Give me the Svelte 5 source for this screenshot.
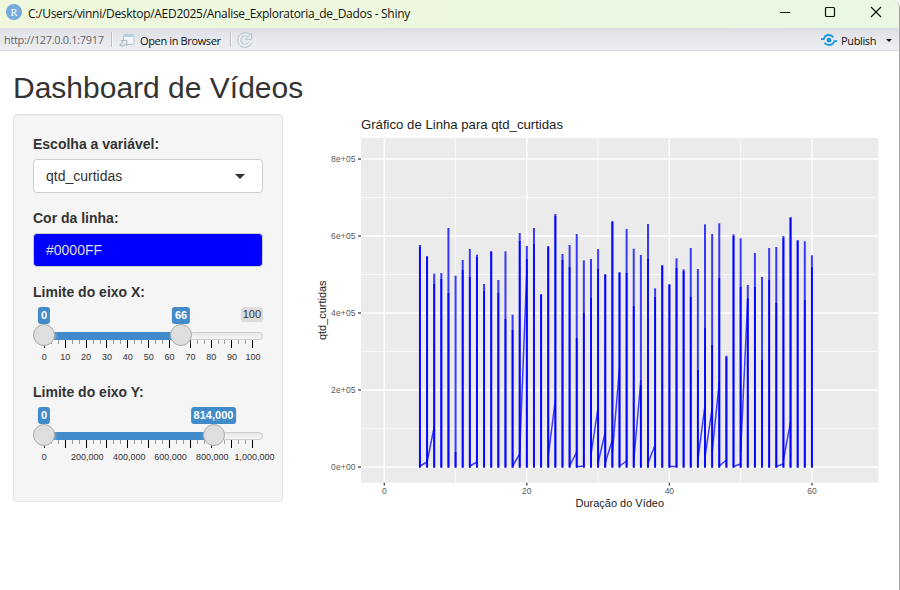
<script>
  const baseline = 467.6;
  const px = (n) => 384.3 + n * 7.127;

  // [top of the line, height at which overlapping strokes turn solid], durations 5 to 60
  const spikes = [
    [245, 247], [256, 257], [273.7, 284], [273, 279], [228, 293], [275.7, 452], [260, 270], [249, 277], [254.7, 257],
    [284, 291], [251, 252], [280, 293], [251.3, 319], [314.7, 330], [233, 241], [246, 259], [228, 244], [294, 295],
    [246, 247], [214, 216], [254, 260], [245, 267], [234, 338], [260.3, 313], [259, 298], [249, 269], [274, 275],
    [221, 222], [272, 273], [229, 273], [248.7, 306], [255, 385], [224, 259], [288.3, 297], [265, 266], [284, 285],
    [258.3, 268], [269.3, 271], [248, 297], [269, 370], [224.3, 328], [234, 345], [223.3, 278], [355.7, 357],
    [234.3, 236], [238.3, 287], [285, 299], [253, 287], [277, 360], [248, 280], [247, 303], [236, 238], [217, 218],
    [240, 241], [241.3, 300], [255.3, 267]
  ];

  const links = [
    [5, 466, 462], [6, 462, 427], [12, 466, 462], [18, 466, 454], [19, 452, 270], [23, 456, 400], [26, 466, 452],
    [27, 466.8, 466], [29, 455, 407], [30, 463, 432], [31, 463, 440], [32, 453, 368], [33, 466, 461], [35, 461, 380],
    [37, 463, 445], [40, 466.5, 466.5], [44, 460, 405], [45, 457, 408], [46, 452, 382], [47, 466, 460],
    [49, 466.5, 464], [50, 452, 298], [55, 466.5, 464], [56, 460, 422]
  ];

  const yTicks = [[159, '8e+05'], [236, '6e+05'], [313, '4e+05'], [390, '2e+05'], [467, '0e+00']];
  const xTicks = [0, 20, 40, 60];

  const sliders = [
    { label: 'Limite do eixo X:', value: '66', at: 148, max: '100',
      ticks: [0, 10, 20, 30, 40, 50, 60, 70, 80, 90, 100].map((v, i) => [i * 20.87, String(v)]) },
    { label: 'Limite do eixo Y:', value: '814,000', at: 180.5, max: '',
      ticks: [[0, '0'], [43, '200,000'], [85, '400,000'], [126.2, '600,000'], [168, '800,000'], [210.2, '1,000,000']] }
  ];
  const marks = Array.from({ length: 31 }, (_, i) => i);
</script>

<div class="window">
  <header class="titlebar">
    <svg class="logo" width="16" height="16" viewBox="0 0 16 16">
      <circle cx="8" cy="8" r="8" fill="#75aadb" />
      <text x="8" y="11.6" text-anchor="middle" font-family="Liberation Serif, serif" font-size="10.5" fill="#fff">R</text>
    </svg>
    <span class="caption">C:/Users/vinni/Desktop/AED2025/Analise_Exploratoria_de_Dados - Shiny</span>
    <svg class="controls" width="104" height="12" viewBox="0 0 104 12" fill="none" stroke="#111" stroke-width="1">
      <path d="M0 6.5H10" />
      <rect x="45.5" y="1.5" width="9" height="9" rx="1" stroke-width="1.2" />
      <path d="M91 1L101 11M101 1L91 11" stroke-width="1.2" />
    </svg>
  </header>

  <div class="toolbar">
    <span class="url">http://127.0.0.1:7917</span>
    <i class="sep"></i>
    <svg class="open" width="16" height="14" viewBox="0 0 16 14" fill="none">
      <rect x="4.5" y="1.5" width="10.5" height="10" rx="1.5" fill="#f1f5f9" stroke="#b4c8d8" />
      <path d="M5 3H14.5" stroke="#b5d1e7" stroke-width="2" />
      <path d="M.7 12.3L3.6 8.8L2.2 7.4H7.8V12.6L6.2 11.2L4 13.2Z" fill="#e4e8ee" stroke="#a3b0bb" stroke-width=".9" />
    </svg>
    <span class="browse">Open in Browser</span>
    <i class="sep second"></i>
    <svg class="reload" width="16" height="16" viewBox="0 0 16 16" fill="none">
      <path d="M12.3 4A5.8 5.8 0 1 0 13.3 10.5" stroke="#b4c3d0" stroke-width="3.8" />
      <path d="M12.3 4A5.8 5.8 0 1 0 13.3 10.5" stroke="#ecf1f6" stroke-width="2" />
      <path d="M14.6 1.2V7.3H8.5Z" fill="#e8eef4" stroke="#b4c3d0" />
    </svg>
    <div class="publish">
      <svg width="16" height="12" viewBox="0 0 16 12" fill="none" stroke="#1396e2" stroke-width="1.8">
        <circle cx="8" cy="6.2" r="2.4" fill="#1396e2" stroke="none" />
        <path d="M0 5.1H2.7C3.5 2.5 5.3 1 7.8 1C9.8 1 11.2 1.7 12.4 3.2" />
        <path d="M16 7.1H13.4C12.6 9.6 10.6 11 8.2 11C6.2 11 4.6 10.3 3.5 8.7" />
      </svg>
      <span>Publish</span>
      <i class="drop"></i>
    </div>
  </div>

  <main>
    <h2>Dashboard de Vídeos</h2>
    <div class="row">
      <form class="well">
        <div class="group">
          <span class="label">Escolha a variável:</span>
          <div class="input select"><span>qtd_curtidas</span><i class="caret"></i></div>
        </div>
        <div class="group">
          <span class="label">Cor da linha:</span>
          <div class="input colour">#0000FF</div>
        </div>
        {#each sliders as s}
          <div class="group">
            <span class="label">{s.label}</span>
            <div class="slider">
              <div class="track"></div>
              <div class="fill" style="width:{s.at - 11}px"></div>
              <svg class="scale" width="250" height="27" viewBox="0 0 250 27">
                {#each marks as m}
                  <rect x={Math.round(11 + m * 6.94)} y="0" width="1" height={m % 3 ? 4 : 8} fill={m % 3 ? '#999' : '#000'} />
                {/each}
                {#each s.ticks as [x, text]}
                  <text x={x + 11.3} y="20" text-anchor="middle">{text}</text>
                {/each}
              </svg>
              <i class="handle" style="left:0"></i>
              <i class="handle" style="left:{s.at - 11}px"></i>
              <b class="tag" style="left:11px">0</b>
              <b class="tag" style="left:{s.at}px">{s.value}</b>
              {#if s.max}<span class="max">{s.max}</span>{/if}
            </div>
          </div>
        {/each}
      </form>

      <svg class="plot" width="586" height="400" viewBox="313 114 586 400">
        <text class="title" x="361" y="129" textLength="202" lengthAdjust="spacingAndGlyphs">Gráfico de Linha para qtd_curtidas</text>
        <rect x="361" y="138" width="517.5" height="344.7" fill="#ebebeb" />
        <g stroke="#fff">
          {#each [197.5, 274.5, 351.5, 428.5] as y}<path d="M361 {y}H878.5" stroke-width=".7" />{/each}
          {#each [10, 30, 50] as n}<path d="M{px(n)} 138V482.7" stroke-width=".7" />{/each}
          {#each yTicks as [y]}<path d="M361 {y}H878.5" stroke-width="1.4" />{/each}
          {#each xTicks as n}<path d="M{px(n)} 138V482.7" stroke-width="1.4" />{/each}
        </g>
        <g stroke="#0000ff">
          {#each spikes as [top, solid], i}
            <path d="M{px(i + 5)} {top}V{baseline}" stroke-width="2" stroke-opacity=".76" />
            <path d="M{px(i + 5)} {solid}V{baseline}" stroke-width="1.8" stroke-opacity=".9" />
          {/each}
          {#each links as [n, a, b]}
            <path d="M{px(n)} {a}L{px(n + 1)} {b}" stroke-width="1.5" stroke-opacity=".75" />
          {/each}
        </g>
        {#each yTicks as [y, t]}
          <path d="M358 {y}H361" stroke="#444" stroke-width="1.3" />
          <text class="tick" x="355.5" y={y + 3} text-anchor="end" textLength="24.5">{t}</text>
        {/each}
        {#each xTicks as n}
          <path d="M{px(n)} 482.7V485.5" stroke="#444" stroke-width="1.3" />
          <text class="tick" x={px(n)} y="494" text-anchor="middle">{n}</text>
        {/each}
        <text class="axis" x="575.5" y="507" textLength="88.5" lengthAdjust="spacingAndGlyphs">Duração do Vídeo</text>
        <text class="axis" transform="translate(326 340) rotate(-90)" textLength="59.5" lengthAdjust="spacingAndGlyphs">qtd_curtidas</text>
      </svg>
    </div>
  </main>
</div>

<style>
  :global(body) { background: #fff; }
  .window {
    box-sizing: border-box; width: 900px; height: 590px; overflow: hidden;
    border-right: 1px solid #a6a6a6; border-top-right-radius: 7px; background: #fff;
    font-family: "Liberation Sans", Arial, sans-serif; color: #333;
  }
  .titlebar {
    display: flex; align-items: center; height: 28px; box-sizing: border-box; padding: 0 15px 4px 6px;
    background: linear-gradient(90deg, #eff8dc, #eaf7e3);
  }
  .caption { margin-left: 6px; font: 12px/18px "Open Sans", sans-serif; letter-spacing: -.3px; color: #111; white-space: nowrap; padding-top: 3px; }
  .controls { margin-left: auto; }
  .toolbar {
    display: flex; align-items: center; height: 23px; box-sizing: border-box; padding: 1px 7px 0 4px;
    border-bottom: 1px solid #d6d8dc; background: linear-gradient(#dddfe4, #e9eaee 60%, #edeef1);
    font: 11px/18px "Open Sans", sans-serif; color: #111; white-space: nowrap;
  }
  .url { width: 107px; color: #666; letter-spacing: -.34px; }
  .sep { width: 1px; height: 15px; background: #bcbfc4; border-right: 1px solid #f7f7f9; }
  .open { margin-left: 6px; }
  .browse { width: 82px; margin-left: 5px; letter-spacing: -.36px; padding-top: 2px; }
  .second { margin-left: 8px; }
  .reload { margin-left: 5px; }
  .publish { display: flex; align-items: center; margin-left: auto; }
  .publish span { width: 37px; margin-left: 4px; padding-top: 2px; letter-spacing: -.36px; }
  .drop { margin: 1px 0 0 8px; border: 3px solid transparent; border-top-color: #111; border-bottom: 0; }
  main { padding: 20px 0 0 13px; }
  h2 { margin: 0 0 10px; font-size: 30px; line-height: 33px; font-weight: 400; }
  .row { display: flex; align-items: flex-start; gap: 30px; }
  .well {
    flex: none; box-sizing: border-box; width: 270px; height: 388px; padding: 19px; border: 1px solid #e3e3e3;
    border-radius: 4px; background: #f5f5f5; box-shadow: inset 0 1px 1px rgba(0, 0, 0, .05);
  }
  .group { margin-bottom: 15px; }
  .label { display: block; margin-bottom: 5px; font-size: 14px; line-height: 20px; font-weight: 700; }
  .input {
    display: flex; align-items: center; box-sizing: border-box; height: 34px; padding: 0 12px;
    border: 1px solid #ccc; border-radius: 4px; background: #fff; font-size: 14px;
  }
  .select { justify-content: space-between; }
  .caret { margin-right: 5px; border: 5px solid transparent; border-top-color: #333; border-bottom: 0; }
  .colour { background: #00f; color: #ddd; }
  .slider { position: relative; height: 60px; }
  .track {
    position: absolute; box-sizing: border-box; top: 25px; left: 0; width: 230px; height: 8px;
    border: 1px solid #ccc; border-radius: 8px; background: linear-gradient(#dedede -50%, #fff 150%);
  }
  .fill { position: absolute; top: 25px; left: 11px; height: 8px; background: #428bca; }
  .scale { position: absolute; top: 33px; left: 0; }
  .scale text { font-size: 9px; fill: #333; }
  .handle {
    position: absolute; box-sizing: border-box; top: 17px; width: 22px; height: 22px; border: 1px solid #ababab;
    border-radius: 50%; background: #dedede; box-shadow: 1px 1px 3px rgba(255, 255, 255, .3);
  }
  .tag, .max { position: absolute; top: 0; padding: 3px; border-radius: 3px; font-size: 11px; line-height: 11px; }
  .tag { transform: translateX(-50%); background: #428bca; color: #fff; }
  .max { right: 0; padding: 2px; background: #dcdcdc; color: #333; }
  .plot { flex: none; font-family: "Liberation Sans", Arial, sans-serif; }
  .title { font-size: 13px; fill: #222; }
  .axis { font-size: 11px; fill: #222; }
  .tick { font-size: 8.5px; fill: #5a5a5a; }
</style>
